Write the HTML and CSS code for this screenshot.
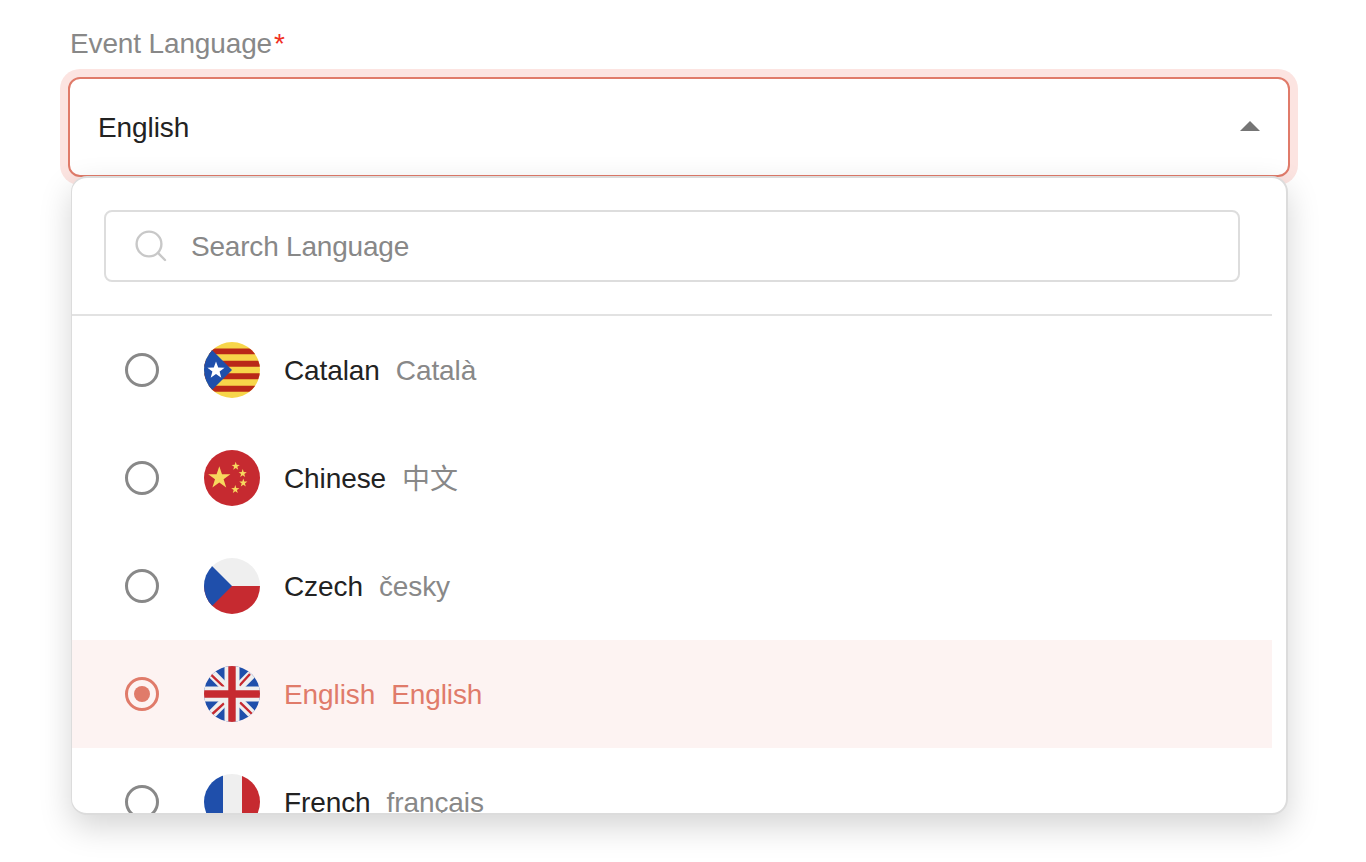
FILE: index.html
```html
<!DOCTYPE html>
<html lang="en">
<head>
<meta charset="utf-8">
<title>Event Language</title>
<link rel="stylesheet" href="styles.css">
</head>
<body>
<main class="field">
  <label class="field-label">Event Language<span class="required">*</span></label>
  <div class="select">
    <span class="select-value">English</span>
    <svg class="caret" width="20" height="10" viewBox="0 0 20 10"><path d="M10 0 L20 10 L0 10 Z" fill="#757575"/></svg>
  </div>
  <div class="dropdown">
    <div class="search-wrap">
      <div class="search">
        <svg class="search-icon" width="32" height="32" viewBox="0 0 32 32" fill="none" stroke="#c8c8c8" stroke-width="2.4" stroke-linecap="round"><circle cx="14" cy="14" r="12.4"/><path d="M23.4 23.4 L30 30"/></svg>
        <span class="search-text">Search Language</span>
      </div>
    </div>
    <ul class="list">
      <li class="row">
        <span class="radio"></span>
        <svg class="flag" width="56" height="56" viewBox="0 0 56 56">
          <defs><clipPath id="c1"><circle cx="28" cy="28" r="28"/></clipPath></defs>
          <g clip-path="url(#c1)">
            <rect width="56" height="56" fill="#f7d64a"/>
            <path d="M0 6.5h56v5.7H0zM0 18.7h56v6H0zM0 31.2h56v6H0zM0 43.7h56v6H0z" fill="#b92818"/>
            <path d="M0 0 L28 28 L0 56 Z" fill="#1f4fab"/>
            <path d="M12 19.5l2.2 6 6.4.2-5 3.9 1.7 6.1-5.3-3.6-5.3 3.6 1.7-6.1-5-3.9 6.4-.2z" fill="#fff"/>
          </g>
        </svg>
        <span class="label"><span class="name">Catalan</span><span class="native">Català</span></span>
      </li>
      <li class="row">
        <span class="radio"></span>
        <svg class="flag" width="56" height="56" viewBox="0 0 56 56">
          <circle cx="28" cy="28" r="28" fill="#c62a30"/>
          <g fill="#f7d85e">
            <path d="M15.3 16.2l2.7 8 8.4.1-6.8 5 2.6 8.1-6.9-4.9-6.9 4.9 2.6-8.1-6.8-5 8.4-.1z"/>
            <path d="M31.7 11.8l1 3 3.1.1-2.5 1.9.9 3-2.5-1.8-2.5 1.8.9-3-2.5-1.9 3.1-.1z"/>
            <path d="M38.7 19.1l1 3 3.1.1-2.5 1.9.9 3-2.5-1.8-2.5 1.8.9-3-2.5-1.9 3.1-.1z"/>
            <path d="M39.3 28.5l1 3 3.1.1-2.5 1.9.9 3-2.5-1.8-2.5 1.8.9-3-2.5-1.9 3.1-.1z"/>
            <path d="M31.3 35.1l1 3 3.1.1-2.5 1.9.9 3-2.5-1.8-2.5 1.8.9-3-2.5-1.9 3.1-.1z"/>
          </g>
        </svg>
        <span class="label"><span class="name">Chinese</span><span class="native native-cjk">中文</span></span>
      </li>
      <li class="row">
        <span class="radio"></span>
        <svg class="flag" width="56" height="56" viewBox="0 0 56 56">
          <defs><clipPath id="c3"><circle cx="28" cy="28" r="28"/></clipPath></defs>
          <g clip-path="url(#c3)">
            <rect width="56" height="28" fill="#efefef"/>
            <rect y="28" width="56" height="28" fill="#c62a30"/>
            <path d="M0 0 L28 28 L0 56 Z" fill="#1f4fab"/>
          </g>
        </svg>
        <span class="label"><span class="name">Czech</span><span class="native">česky</span></span>
      </li>
      <li class="row row-selected">
        <span class="radio radio-on"></span>
        <svg class="flag" width="56" height="56" viewBox="0 0 56 56">
          <defs><clipPath id="c4"><circle cx="28" cy="28" r="28"/></clipPath></defs>
          <g clip-path="url(#c4)">
            <rect width="56" height="56" fill="#1f4fab"/>
            <path d="M0 0L56 56M56 0L0 56" stroke="#efefef" stroke-width="9"/>
            <path d="M7 8.7L21 22M35.3 19.7L46 8M8.3 48L20 37.3M36 36.3L48 48" stroke="#c62a30" stroke-width="2.4"/>
            <path d="M28 0V56M0 28H56" stroke="#efefef" stroke-width="15"/>
            <path d="M28 0V56M0 28H56" stroke="#c62a30" stroke-width="7.4"/>
          </g>
        </svg>
        <span class="label"><span class="name">English</span><span class="native">English</span></span>
      </li>
      <li class="row">
        <span class="radio"></span>
        <svg class="flag" width="56" height="56" viewBox="0 0 56 56">
          <defs><clipPath id="c5"><circle cx="28" cy="28" r="28"/></clipPath></defs>
          <g clip-path="url(#c5)">
            <rect width="19" height="56" fill="#1f4fab"/>
            <rect x="19" width="19" height="56" fill="#efefef"/>
            <rect x="38" width="18" height="56" fill="#c62a30"/>
          </g>
        </svg>
        <span class="label"><span class="name">French</span><span class="native">français</span></span>
      </li>
    </ul>
  </div>
</main>
</body>
</html>
```
FILE: styles.css
```css
* { box-sizing: border-box; }
html, body { margin: 0; height: 100%; background: #fff; overflow: hidden; }
body { font-family: "Liberation Sans", "Noto Sans CJK SC", sans-serif; color: #222; }
.field { position: relative; padding: 27px 76px 0 68px; }
.field-label { display: block; padding-left: 2px; height: 33px; line-height: 33px; font-size: 28px; letter-spacing: -.14px; color: #888; }
.required { margin-left: 2px; color: #f0301f; }
.select {
  display: flex; align-items: center; justify-content: space-between;
  margin-top: 17px; height: 100px; padding: 0 28px 0 28px;
  border: 2px solid #e07b6a; border-radius: 12px;
  box-shadow: 0 0 0 8px #fce4e1; background: #fff;
}
.select-value { font-size: 28px; line-height: 34px; padding-top: 1px; letter-spacing: -.1px; color: #222; }
.caret { display: block; margin-top: -2px; }
.dropdown {
  position: absolute; left: 71px; top: 176px; width: 1217px; height: 639px;
  background: #fff; border: 2px solid #dcdcdc; border-left-width: 1px; border-radius: 16px;
  box-shadow: 0 12px 32px rgba(0, 0, 0, .17);
  overflow: hidden;
}
.search-wrap { width: 1200px; height: 138px; padding: 32px; border-bottom: 2px solid #e2e2e2; }
.search {
  display: flex; align-items: center; width: 1136px; height: 72px; padding-left: 29px;
  border: 2px solid #ddd; border-radius: 8px;
}
.search-icon { display: block; margin-right: 24px; }
.search-text { font-size: 28px; line-height: 34px; padding-top: 2px; letter-spacing: -.2px; color: #888; }
.list { list-style: none; margin: 0; padding: 0; width: 1200px; }
.row { display: flex; align-items: center; height: 108px; padding-left: 53px; font-size: 28px; }
.row-selected { background: #fdf3f2; color: #e07b6a; }
.radio { width: 34px; height: 34px; border: 3px solid #888; border-radius: 50%; margin-right: 45px; display: flex; align-items: center; justify-content: center; flex: none; }
.radio-on { border-color: #e07b6a; }
.radio-on::after { content: ""; width: 16px; height: 16px; border-radius: 50%; background: #e07b6a; }
.flag { display: block; flex: none; margin-right: 24px; }
.label { display: flex; align-items: baseline; line-height: 34px; padding-top: 2px; letter-spacing: -.1px; }
.native { margin-left: 16px; color: #888; }
.native-cjk { transform: translateY(1px); }
.row-selected .native { color: #e07b6a; }
```
